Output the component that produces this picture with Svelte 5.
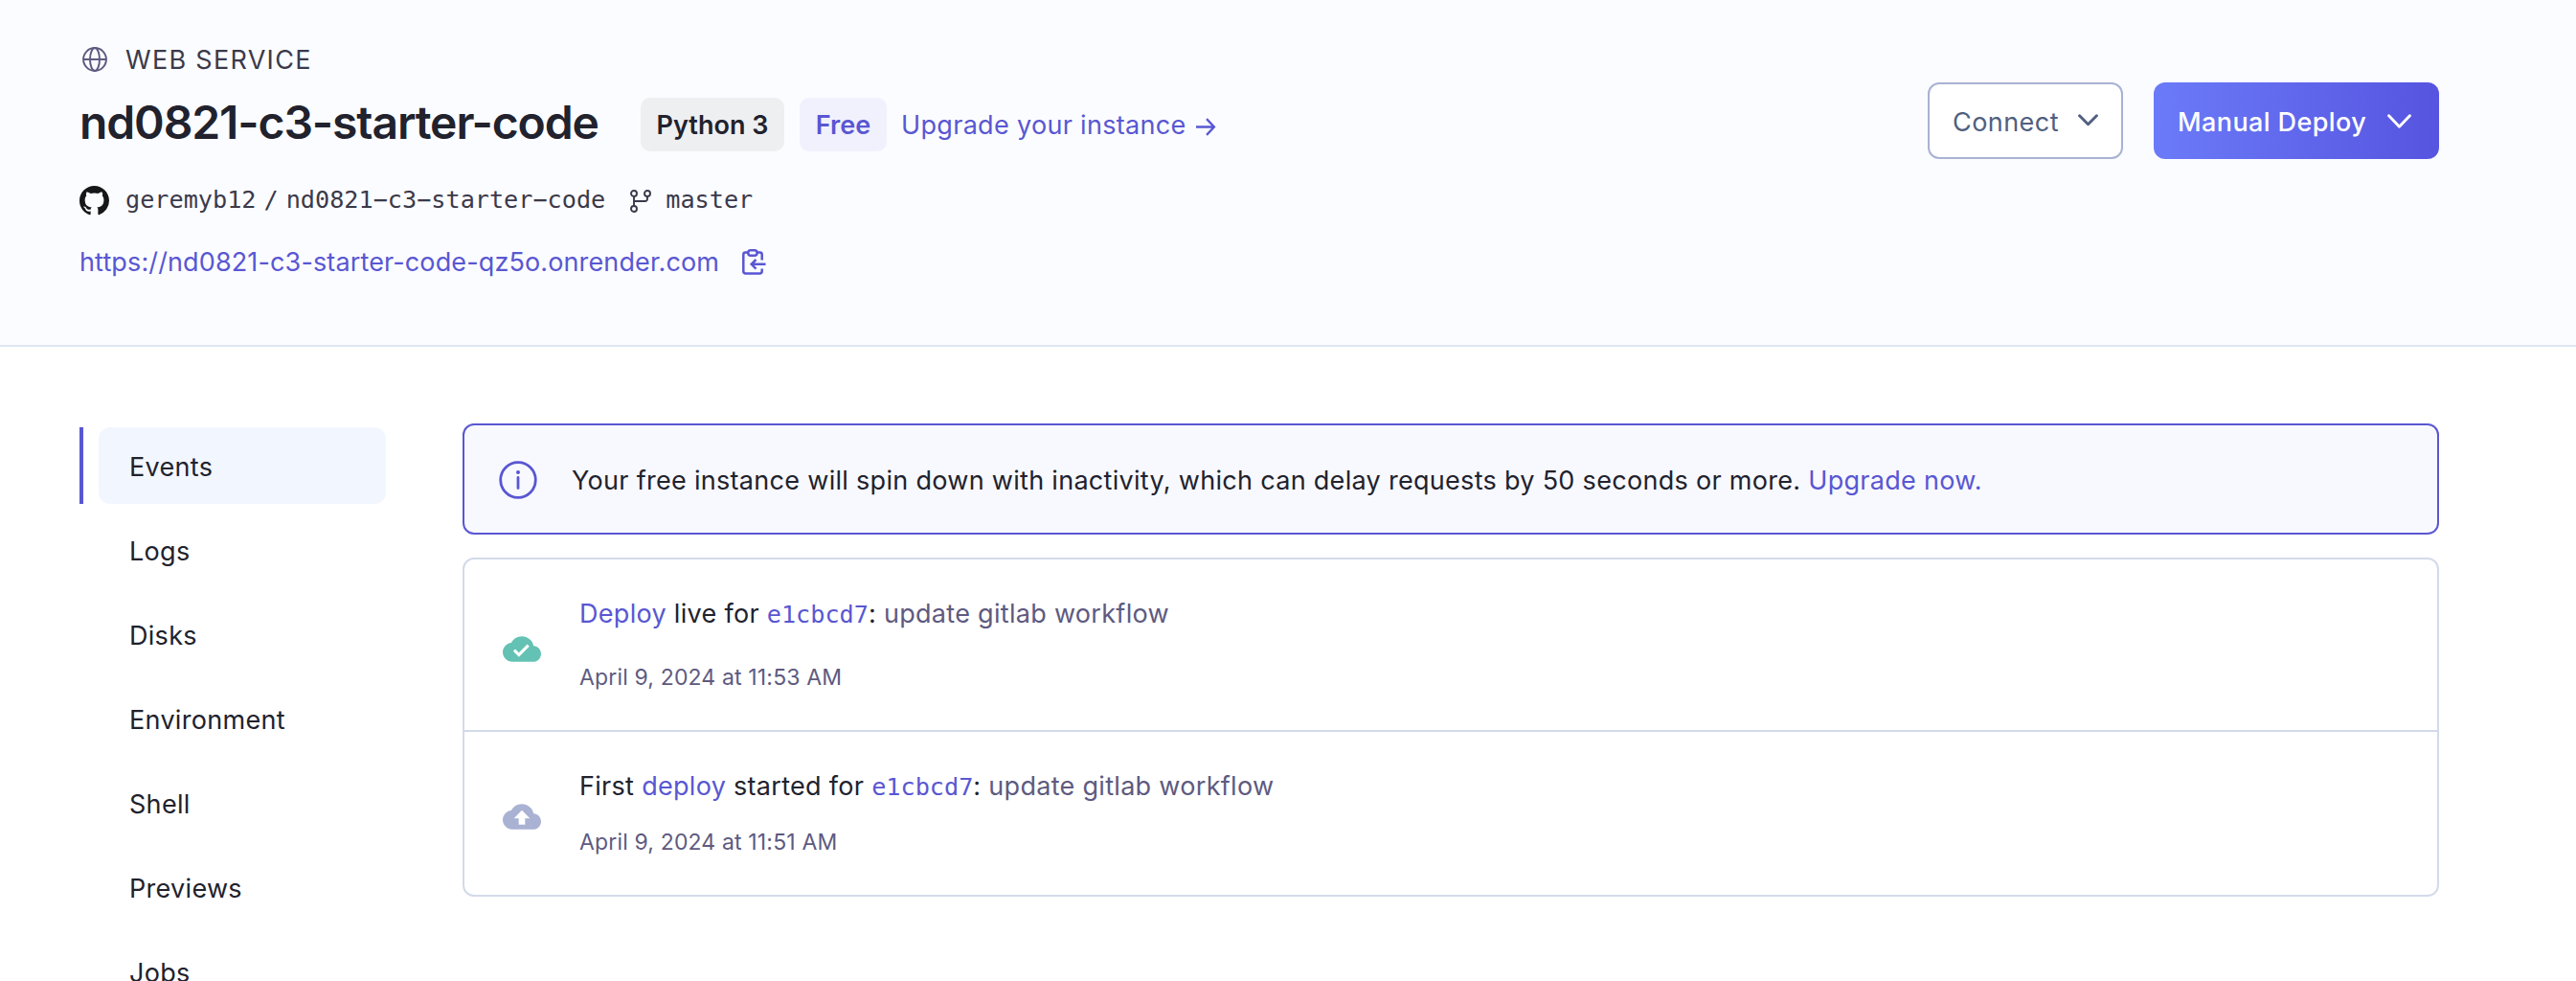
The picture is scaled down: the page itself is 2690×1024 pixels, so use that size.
<script>
  const nav = ['Events', 'Logs', 'Disks', 'Environment', 'Shell', 'Previews', 'Jobs'];
</script>

<header class="top">
  <div class="info">
    <div class="kind">
      <svg class="globe" viewBox="0 0 24 24" fill="none" stroke="#5e5a80" stroke-width="1.8">
        <circle cx="12" cy="12" r="11" />
        <ellipse cx="12" cy="12" rx="4.6" ry="11" />
        <path d="M1 12H23" />
      </svg>
      <span class="kind-text">WEB SERVICE</span>
    </div>
    <div class="title-row">
      <h1>nd0821-c3-starter-code</h1>
      <span class="badge gray">Python 3</span>
      <span class="badge violet">Free</span>
      <a class="upgrade" href="#upgrade"><span>Upgrade your instance</span>
        <svg class="arrow" viewBox="0 0 20 20" fill="none" stroke="currentColor" stroke-width="2.2"><path d="M0 10H18M10.500 2L18 10L10.500 18" /></svg>
      </a>
    </div>
    <div class="repo">
      <svg class="github" viewBox="0 0 16 16" fill="#17171a"><path d="M8 0C3.580 0 0 3.580 0 8c0 3.540 2.290 6.530 5.470 7.590.4.070.55-.17.55-.38 0-.19-.01-.82-.01-1.490-2.010.37-2.530-.49-2.690-.94-.09-.23-.48-.94-.82-1.130-.28-.15-.68-.52-.01-.53.63-.01 1.080.58 1.230.82.72 1.210 1.870.87 2.330.66.070-.52.28-.87.51-1.070-1.780-.2-3.640-.89-3.640-3.950 0-.87.31-1.590.82-2.150-.08-.2-.36-1.020.080-2.120 0 0 .67-.21 2.200.82.64-.18 1.320-.27 2-.27s1.360.09 2 .27c1.530-1.040 2.200-.82 2.200-.82.44 1.100.16 1.920.080 2.120.51.56.82 1.270.82 2.150 0 3.070-1.870 3.750-3.650 3.950.29.25.54.73.54 1.480 0 1.070-.01 1.930-.01 2.200 0 .21.15.46.55.38A8.010 8.010 0 0 0 16 8c0-4.420-3.580-8-8-8z" /></svg>
      <span class="mono">geremyb12</span>
      <span class="mono slash">/</span>
      <span class="mono">nd0821−c3−starter−code</span>
      <svg class="branch" viewBox="0 0 22 24" fill="none" stroke="#3b3a4a" stroke-width="1.9">
        <circle cx="4" cy="4" r="3" /><circle cx="18" cy="4" r="3" /><circle cx="4" cy="20" r="3" />
        <path d="M4 7V17M18 7V9.500Q18 12 15.500 12H4" />
      </svg>
      <span class="mono">master</span>
    </div>
    <div class="url">
      <a class="url-text" href="#site">https://nd0821-c3-starter-code-qz5o.onrender.com</a>
      <svg class="copy" viewBox="0 0 25 27" fill="none" stroke="#5957d2" stroke-width="2.500">
        <path d="M15.500 3.500H18.500Q20.700 3.500 20.700 5.700V11.500M6 3.500H3.500Q1.300 3.500 1.300 5.700V23Q1.300 25.500 3.800 25.500H18.200Q20.700 25.500 20.700 23V20.500" />
        <rect x="6.300" y="1.300" width="9.200" height="5.400" rx="2.500" />
        <path d="M24.500 15.800H10M14.500 11L9.700 15.800L14.500 20.600" />
      </svg>
    </div>
  </div>
  <div class="actions">
    <button class="btn connect"><span>Connect</span>
      <svg viewBox="0 0 20 12" fill="none" stroke="currentColor" stroke-width="2.800" stroke-linecap="round" stroke-linejoin="round"><path d="M1.500 1.500L10 10L18.500 1.500" /></svg></button>
    <button class="btn deploy"><span>Manual Deploy</span>
      <svg viewBox="0 0 24 15" fill="none" stroke="currentColor" stroke-width="2.800" stroke-linecap="round" stroke-linejoin="round"><path d="M1.500 1.500L12 12.500L22.500 1.500" /></svg></button>
  </div>
</header>

<div class="body">
  <nav>
    {#each nav as label, i}
      <a class="item" class:active={i === 0} href="#{label}"><span class="pill">{label}</span></a>
    {/each}
  </nav>
  <main>
    <div class="notice">
      <svg class="info-icon" viewBox="0 0 40 40" fill="none" stroke="#5957d2" stroke-width="2.800">
        <circle cx="20" cy="20" r="18.300" /><path d="M20 17.500V28.500" stroke-linecap="round" /><circle cx="20" cy="12" r="2" fill="#5957d2" stroke="none" />
      </svg>
      <p>Your free instance will spin down with inactivity, which can delay requests by 50 seconds or more. <a href="#upgrade">Upgrade now.</a></p>
    </div>
    <div class="events">
      <div class="event first">
        <svg class="cloud" viewBox="0 0 24 16" fill="#63c2b3">
          <path d="M19.350 6.040C18.670 2.590 15.640 0 12 0 9.110 0 6.600 1.640 5.350 4.040 2.340 4.360 0 6.910 0 10c0 3.310 2.690 6 6 6h13c2.760 0 5-2.240 5-5 0-2.640-2.050-4.780-4.650-4.960z" />
          <path d="M7.200 8.700L10.100 11.600L16 5.700" fill="none" stroke="#fff" stroke-width="1.900" />
        </svg>
        <div class="lines">
          <p class="what"><a href="#deploy">Deploy</a> live for <a class="hash" href="#commit">e1cbcd7</a>: <span class="muted">update gitlab workflow</span></p>
          <p class="when">April 9, 2024 at 11:53 AM</p>
        </div>
      </div>
      <div class="event second">
        <svg class="cloud" viewBox="0 0 24 16" fill="#a9b2d3">
          <path d="M19.350 6.040C18.670 2.590 15.640 0 12 0 9.110 0 6.600 1.640 5.350 4.040 2.340 4.360 0 6.910 0 10c0 3.310 2.690 6 6 6h13c2.760 0 5-2.240 5-5 0-2.640-2.050-4.780-4.650-4.960z" />
          <path d="M10 13V9H7L12 4L17 9H14V13Z" fill="#fff" />
        </svg>
        <div class="lines">
          <p class="what">First <a href="#deploy">deploy</a> started for <a class="hash" href="#commit">e1cbcd7</a>: <span class="muted">update gitlab workflow</span></p>
          <p class="when">April 9, 2024 at 11:51 AM</p>
        </div>
      </div>
    </div>
  </main>
</div>

<style>
  :global(body) { background: #fff; font-family: Inter, "Liberation Sans", sans-serif; color: #21222d; font-size: 27px; overflow: hidden; }
  :global(#app) { height: 1024px; overflow: hidden; }
  * { box-sizing: border-box; }
  p, h1 { margin: 0; }
  a { color: #5957d2; text-decoration: none; }
  svg { flex: none; display: block; }
  span, p, a { white-space: nowrap; }
  .top { height: 362px; background: #fbfcff; border-bottom: 2px solid #dde7f3; display: flex; justify-content: space-between; padding: 0 143px 0 83px; }
  .info { display: flex; flex-direction: column; padding-top: 42px; }
  .kind { display: flex; align-items: center; height: 40px; gap: 19px; padding-left: 3px; color: #3b3a4a; }
  .globe { width: 26px; height: 26px; }
  .kind-text { font-size: 27px; letter-spacing: 1.300px; padding-top: 1px; }
  .title-row { display: flex; align-items: center; height: 92px; padding-top: 3px; }
  h1 { font-size: 48px; font-weight: 600; letter-spacing: -1.100px; width: 586px; line-height: 60px; margin-top: -3px; }
  .badge { height: 56px; border-radius: 10px; display: flex; align-items: center; justify-content: center; font-size: 27px; font-weight: 600; padding-top: 1px; }
  .gray { background: #eeeff1; width: 150px; margin-right: 16px; }
  .violet { background: #f1f1fe; color: #5957d2; width: 91px; margin-right: 15px; }
  .upgrade { display: flex; align-items: center; gap: 10px; letter-spacing: 0.320px; padding-top: 1px; }
  .arrow { width: 21px; height: 21px; margin-top: 4px; }
  .repo { display: flex; align-items: center; height: 68px; color: #3b3a4a; }
  .github { width: 31px; height: 31px; margin: 3px 17px 0 0; }
  .mono, .hash { font-family: "DejaVu Sans Mono", "Liberation Mono", monospace; font-size: 25.200px; letter-spacing: 0; }
  .slash { margin: 0 8px; }
  .branch { width: 22px; height: 24px; margin: 4px 15px 0 26px; }
  .url { display: flex; align-items: center; height: 62px; gap: 24px; letter-spacing: 0.130px; }
  .copy { width: 25px; height: 27px; margin-top: 1px; }
  .actions { display: flex; gap: 32px; padding-top: 86px; }
  .btn { height: 80px; border-radius: 12px; font: inherit; display: flex; align-items: center; justify-content: space-between; }
  .btn span { padding-top: 2px; }
  .connect { width: 204px; border: 2px solid #a9b2d3; background: #fff; color: #505f80; padding: 0 24px; letter-spacing: 0.450px; }
  .connect svg { width: 21px; height: 13px; margin-top: -1px; }
  .deploy { width: 298px; border: 0; color: #fff; font-weight: 500; background: linear-gradient(90deg, #6b7bf8, #5654e0); padding: 0 29px 0 25px; letter-spacing: 0.400px; }
  .deploy svg { width: 25px; height: 16px; margin-top: 1px; }
  .body { display: flex; padding: 80px 143px 0 83px; gap: 80px; letter-spacing: 0.300px; }
  nav { width: 320px; padding-top: 4px; display: flex; flex-direction: column; gap: 8px; }
  .item { height: 80px; border-left: 4px solid transparent; padding-left: 16px; color: #21222d; display: flex; flex: none; }
  .pill { flex: 1; border-radius: 12px; padding: 2px 0 0 32px; display: flex; align-items: center; }
  .active { border-color: #5957d2; }
  .active .pill { background: #f2f6fe; }
  main { flex: 1; display: flex; flex-direction: column; gap: 24px; }
  .notice { height: 116px; border: 2px solid #5957d2; border-radius: 12px; background: #f8f9fe; display: flex; align-items: center; padding: 2px 0 0 36px; gap: 36px; }
  .info-icon { width: 40px; height: 40px; }
  .events { height: 354px; border: 2px solid #d3daea; border-radius: 12px; }
  .event { display: flex; align-items: center; padding-left: 40px; gap: 40px; }
  .first { height: 180px; border-bottom: 2px solid #d3daea; }
  .second { height: 170px; }
  .cloud { width: 40px; height: 27px; }
  .first .cloud { margin-top: 8px; }
  .second .cloud { margin-top: 6px; }
  .lines { display: flex; flex-direction: column; padding-top: 1px; }
  .first .lines { gap: 31px; }
  .second .lines { gap: 23px; padding-top: 2px; }
  .what { line-height: 34px; }
  .when { font-size: 23px; line-height: 34px; color: #5e5a80; letter-spacing: 0.150px; }
  .muted { color: #5e5a80; }
</style>
